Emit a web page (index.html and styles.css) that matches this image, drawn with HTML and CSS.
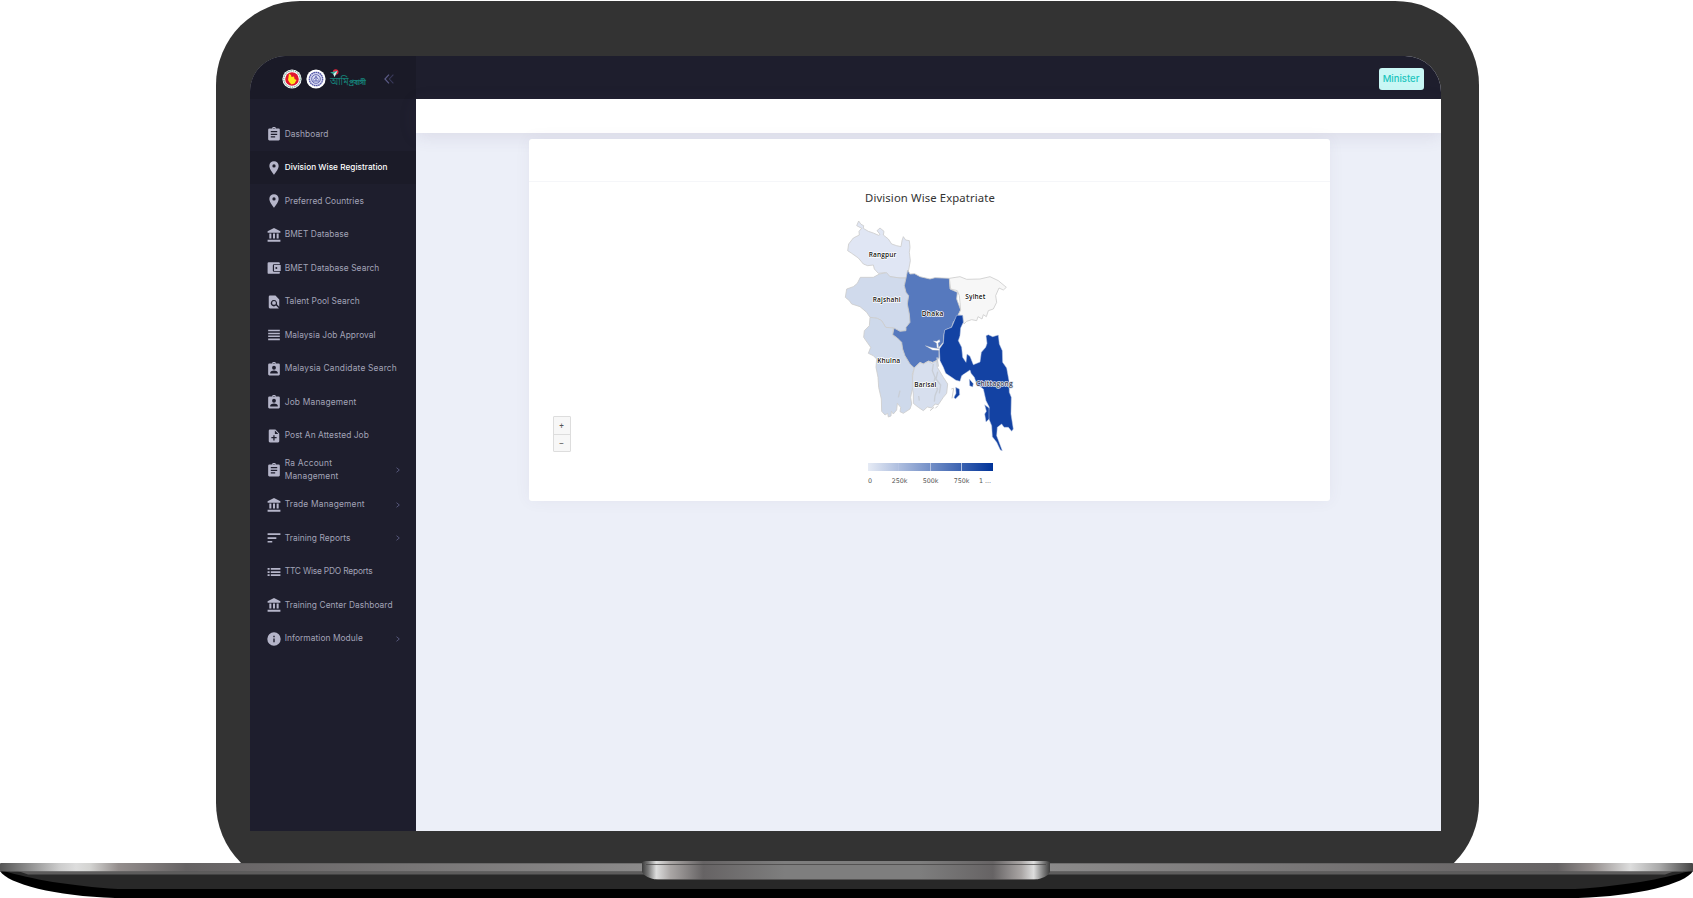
FILE: index.html
```html
<!DOCTYPE html>
<html lang="en">
<head>
<meta charset="utf-8">
<title>Division Wise Registration</title>
<link rel="stylesheet" href="styles.css">
</head>
<body>
<svg class="sprite" width="0" height="0">
  <symbol id="clip" viewBox="0 0 24 24"><path fill-rule="evenodd" d="M20 2.500h-5a3 3 0 0 0-6 0H4a2 2 0 0 0-2 2V21a2 2 0 0 0 2 2h16a2 2 0 0 0 2-2V4.500a2 2 0 0 0-2-2zm-8-1a1 1 0 1 1 0 2 1 1 0 0 1 0-2zm2 16.500H6.500v-2H14zm3.500-4.500h-11v-2h11zm0-4.500h-11V7h11z"/></symbol>
  <symbol id="pin" viewBox="0 0 24 24"><path fill-rule="evenodd" d="M12 .5C7.400.5 4 4 4 8.500 4 14.200 12 23.500 12 23.500s8-9.300 8-15C20 4 16.600.5 12 .5zm0 10.800a2.800 2.800 0 1 1 0-5.600 2.800 2.800 0 0 1 0 5.600z"/></symbol>
  <symbol id="bank" viewBox="0 0 24 24"><path d="M4 9.500V18h3.500V9.500zm6.300 0V18h3.400V9.500zM1 23.500h22V20H1zM16.500 9.500V18H20V9.500zM12 0 1 5.500V8h22V5.500z"/></symbol>
  <symbol id="wallet" viewBox="0 0 24 24"><path fill-rule="evenodd" d="M22 18.500V20a2 2 0 0 1-2 2H3a2 2 0 0 1-2-2V4a2 2 0 0 1 2-2h17a2 2 0 0 1 2 2v1.500H12a2 2 0 0 0-2 2v9a2 2 0 0 0 2 2zM12 17h11.500V7H12zm4-3.300a1.700 1.700 0 1 1 0-3.400 1.700 1.700 0 0 1 0 3.400z"/></symbol>
  <symbol id="find" viewBox="0 0 24 24"><path d="M21 20V7.500L14.500 1H5a2 2 0 0 0-2 2v18a2 2 0 0 0 2 2h14c.5 0 .9-.2 1.200-.4l-4.700-4.400A5.500 5.500 0 1 1 17 16zM8.700 13.500a3.300 3.300 0 1 0 6.600 0 3.300 3.300 0 0 0-6.600 0z"/></symbol>
  <symbol id="lines" viewBox="0 0 24 24"><path d="M2 15.500h20V13H2zm0 5.500h20v-3H2zm0-10.500h20V8H2zM2 3v2.500h20V3z"/></symbol>
  <symbol id="badge" viewBox="0 0 24 24"><path fill-rule="evenodd" d="M20 2.500h-5a3 3 0 0 0-6 0H4a2 2 0 0 0-2 2V21a2 2 0 0 0 2 2h16a2 2 0 0 0 2-2V4.500a2 2 0 0 0-2-2zm-8-1a1 1 0 1 1 0 2 1 1 0 0 1 0-2zm0 5a3.300 3.300 0 1 1 0 6.600 3.300 3.300 0 0 1 0-6.600zm6.500 13h-13V18c0-2.200 4.300-3.400 6.500-3.400s6.500 1.200 6.500 3.400z"/></symbol>
  <symbol id="note" viewBox="0 0 24 24"><path fill-rule="evenodd" d="M14.500 1H5a2 2 0 0 0-2 2v18a2 2 0 0 0 2 2h14a2 2 0 0 0 2-2V7.500zM16.500 16H13v3.500h-2.200V16H7.500v-2.200h3.300v-3.300H13v3.300h3.500zM13.500 8.500v-6l6 6z"/></symbol>
  <symbol id="sort" viewBox="0 0 24 24"><path d="M1 19.500h8V17H1zM1 4v3h22V4zm0 9.500h15v-3H1z"/></symbol>
  <symbol id="list" viewBox="0 0 24 24"><path d="M1 13.500h3.500v-3H1zm0 5.500h3.500v-3H1zM1 8h3.500V5H1zm5.500 5.500H23v-3H6.500zm0 5.500H23v-3H6.500zm0-14v3H23V5z"/></symbol>
  <symbol id="info" viewBox="0 0 24 24"><path fill-rule="evenodd" d="M12 .5a11.500 11.500 0 1 0 0 23 11.500 11.500 0 0 0 0-23zM13.200 17.500h-2.400V11h2.400zm0-8.500h-2.400V6.500h2.400z"/></symbol>
  <symbol id="chev" viewBox="0 0 6 8"><path d="M1.500 1.700 4.300 4 1.500 6.300" fill="none" stroke="#5a5b80" stroke-width=".9"/></symbol>
</svg>

<div class="lid">
  <div class="screen">
    <aside class="sidebar">
      <div class="brand">
        <svg class="seal" viewBox="0 0 20 20"><circle cx="10" cy="10" r="9.600" fill="#fff"/><circle cx="10" cy="10" r="8.200" fill="none" stroke="#4a9277" stroke-width="1" stroke-dasharray="1.500 .8"/><circle cx="10" cy="10" r="6.800" fill="#e0162f"/><path d="M7 4.800 9 6l.5 2 2.500-.5.500 2.500 2 1-2 3.500-3 1-2-2L6 11z" fill="#ffe51c"/></svg>
        <svg class="seal" viewBox="0 0 20 20"><circle cx="10" cy="10" r="9.600" fill="#fff"/><circle cx="10" cy="10" r="6.700" fill="#d2d3ee" stroke="#5458a8" stroke-width="1.300" stroke-dasharray="1.700 .5"/><circle cx="10" cy="10" r="4.300" fill="#dfe1f5" stroke="#4b51a5" stroke-width=".8"/><path d="M6.500 12h7M10 7v5M7.500 10.500l2.500-3 2.500 3" stroke="#6368b3" fill="none"/></svg>
        <svg class="probashi" viewBox="0 0 36 20">
          <circle cx="5.700" cy="3" r="2.800" fill="#e3263c"/><path d="M0 3.500 7.500 1.700 4.500 8 3.300 5z" fill="#2fae9a"/><path d="m3.300 5 4.200-3.300-3 6.300" fill="#d9f1eb"/>
          <text x="0" y="16" textLength="36" lengthAdjust="spacingAndGlyphs"><tspan class="ami">আমি</tspan><tspan class="pro">প্রবাসী</tspan></text>
        </svg>
        <svg class="collapse" viewBox="0 0 10 10"><path d="M5 .6.900 5 5 9.400" fill="none" stroke="#5a5a86" stroke-width="1.200"/><path d="M9.400.6 5.300 5l4.100 4.400" fill="none" stroke="#3a3a5b" stroke-width="1.100"/></svg>
      </div>
      <nav class="menu">
        <a class="item"><svg><use href="#clip"/></svg><span>Dashboard</span></a>
        <a class="item active"><svg><use href="#pin"/></svg><span>Division Wise Registration</span></a>
        <a class="item"><svg><use href="#pin"/></svg><span>Preferred Countries</span></a>
        <a class="item"><svg><use href="#bank"/></svg><span>BMET Database</span></a>
        <a class="item"><svg><use href="#wallet"/></svg><span>BMET Database Search</span></a>
        <a class="item"><svg><use href="#find"/></svg><span>Talent Pool Search</span></a>
        <a class="item"><svg><use href="#lines"/></svg><span>Malaysia Job Approval</span></a>
        <a class="item wide"><svg><use href="#badge"/></svg><span>Malaysia Candidate Search</span></a>
        <a class="item wide"><svg><use href="#badge"/></svg><span>Job Management</span></a>
        <a class="item"><svg><use href="#note"/></svg><span>Post An Attested Job</span></a>
        <a class="item tall"><svg><use href="#clip"/></svg><span>Ra Account<br>Management</span><svg class="arrow"><use href="#chev"/></svg></a>
        <a class="item wide"><svg><use href="#bank"/></svg><span>Trade Management</span><svg class="arrow"><use href="#chev"/></svg></a>
        <a class="item"><svg><use href="#sort"/></svg><span>Training Reports</span><svg class="arrow"><use href="#chev"/></svg></a>
        <a class="item narrow"><svg><use href="#list"/></svg><span>TTC Wise PDO Reports</span></a>
        <a class="item"><svg><use href="#bank"/></svg><span>Training Center Dashboard</span></a>
        <a class="item"><svg><use href="#info"/></svg><span>Information Module</span><svg class="arrow"><use href="#chev"/></svg></a>
      </nav>
    </aside>
    <div class="main">
      <header class="topbar"><span class="role">Minister</span></header>
      <div class="subheader"></div>
      <main class="content">
        <section class="card">
          <div class="card-head"></div>
          <div class="card-body">
            <h1 class="title">Division Wise Expatriate</h1>
            <svg class="map" viewBox="60 100 540 726">
              <g stroke="#cccccc" stroke-width="2.500" stroke-linejoin="round">
                <path fill="#e0e6f4" d="M116 121L123 131 131 135 130 143 145 152 160 157 176 164 180 161 171 150 180 142 192 152 190 163 205 175 215 190 230 195 243 198 246 180 250 168 257 178 268 180 270 200 268 215 271 240 266 268 258 292 240 292 210 288 195 276 175 278 163 265 160 253 143 255 130 250 115 232 95 218 83 210 86 190 100 172 118 163 117 152 125 143 110 135Z"/>
                <path fill="#d0daec" d="M121 290L160 290 178 280 200 276 210 288 240 292 258 292 253 315 258 335 266 345 262 370 268 400 270 425 258 440 258 450 240 452 220 442 197 440 185 420 172 413 150 410 140 395 120 378 95 370 88 360 76 350 80 325 100 318 112 308Z"/>
                <path fill="#ced9eb" d="M150 410L172 413 185 420 197 440 220 442 218 464 232 472 245 485 248 505 255 525 270 550 283 562 277 580 278 620 272 650 275 670 270 685 250 698 240 693 242 680 232 668 230 688 220 700 214 692 213 706 205 709 203 698 195 703 185 692 184 655 176 620 174 590 168 560 170 535 160 525 145 518 152 500 131 470 133 450 148 435Z"/>
                <path fill="#5679be" d="M263 268L270 280 284 279 300 288 330 295 345 291 388 293 390 325 412 335 410 355 422 388 415 402 400 425 395 440 375 448 372 462 370 485 357 500 357 530 353 538 338 545 325 541 310 550 300 545 283 562 270 550 255 525 248 505 245 485 232 472 218 462 222 442 240 452 258 450 258 440 270 425 268 400 262 370 266 345 258 335 253 315 258 292Z"/>
                <path fill="#d7dfee" d="M283 562L300 546 310 550 325 542 335 548 350 540 352 560 370 590 383 610 380 638 370 650 355 672 345 670 335 682 322 679 310 690 295 680 280 668 280 640 277 620 278 585Z"/>
                <path fill="#f7f7f7" d="M388 293L420 288 440 296 480 295 510 288 535 300 559 320 550 328 537 322 527 345 530 365 520 385 505 390 499 408 490 402 486 415 474 408 470 420 455 417 440 422 432 430 428 405 415 402 422 388 420 365 418 345 412 330 392 325 390 310Z"/>
              </g>
              <g fill="#1342a3" stroke="#c3cee6" stroke-width="1.500" stroke-linejoin="round">
                <path d="M410 404L428 404 430 425 422 442 420 465 415 480 425 500 428 530 438 545 441 520 450 527 460 552 480 544 484 515 497 500 501 488 498 465 505 462 518 468 535 463 538 490 547 510 548 545 560 562 567 600 568 635 574 650 573 700 580 745 575 752 565 740 552 740 545 730 532 740 530 765 547 810 541 808 530 785 517 768 515 735 508 718 502 700 508 680 498 660 490 625 470 610 463 590 453 578 450 568 425 585 420 602 408 599 395 590 377 578 370 560 360 540 358 505 370 488 372 462 374 448 395 440Z"/>
                <path d="M448 595L460 609 458 619 449 615ZM407 620L418 625 419 642 406 655 402 650 408 638ZM494 672L507 682 507 715 498 724 494 700 499 692Z"/>
              </g>
              <path d="M340 550l-3 20 8 20-4 20 12 15-8 20-2 18M353 573l-5 22 14 18-4 25M296 646l2 14M240 630l-5 20M351 530l4 28" fill="none" stroke="#c9ced6" stroke-width="4"/>
              <path d="M316 495l20 6 22 3v5l-20-1zM340 481l10 1 8-5 2 6-6 4 2 15-5-1-1-13z" fill="#fff" stroke="#ccc" stroke-width="1"/>
              <path d="M430 585l13-7" stroke="#fff" stroke-width="5" fill="none"/>
              <path d="M394 625l7-2-5 30M330 690l12-10M346 683l8-8" stroke="#ccc" stroke-width="3" fill="none"/>
              <g class="labels">
                <text x="146" y="228" textLength="83">Rangpur</text>
                <text x="158" y="363" textLength="84">Rajshahi</text>
                <text x="305" y="405" textLength="65">Dhaka</text>
                <text x="436" y="355" textLength="60">Sylhet</text>
                <text x="172" y="547" textLength="68">Khulna</text>
                <text x="283" y="620" textLength="66">Barisal</text>
                <text class="pale" x="468" y="617" textLength="110">Chittagong</text>
              </g>
            </svg>
            <div class="legend">
              <div class="scale"><i></i><i></i><i></i><i></i></div>
              <div class="ticks"><span>0</span><span>250k</span><span>500k</span><span>750k</span><span>1 ...</span></div>
            </div>
            <div class="zoom"><span>+</span><span>−</span></div>
          </div>
        </section>
      </main>
    </div>
  </div>
</div>

<svg class="base" viewBox="0 861 1693 37">
  <defs>
    <linearGradient id="edge"><stop offset="0" stop-color="#555"/><stop offset=".02" stop-color="#999"/><stop offset=".035" stop-color="#ccc"/><stop offset=".045" stop-color="#ddd"/><stop offset=".053" stop-color="#d4d4d2"/><stop offset=".07" stop-color="#948e8d"/><stop offset=".11" stop-color="#656263"/><stop offset=".38" stop-color="#8b8a8a"/><stop offset=".62" stop-color="#8b8a8a"/><stop offset=".92" stop-color="#656263"/><stop offset=".94" stop-color="#948e8d"/><stop offset=".963" stop-color="#ddd"/><stop offset=".98" stop-color="#aaa"/><stop offset="1" stop-color="#444"/></linearGradient>
    <linearGradient id="grip"><stop offset="0" stop-color="#3c3c3c"/><stop offset=".015" stop-color="#777"/><stop offset=".035" stop-color="#ddd"/><stop offset=".07" stop-color="#aaa6a5"/><stop offset=".15" stop-color="#666364"/><stop offset=".35" stop-color="#7e7e7e"/><stop offset=".68" stop-color="#7e7e7e"/><stop offset=".86" stop-color="#666364"/><stop offset=".93" stop-color="#aaa6a5"/><stop offset=".96" stop-color="#ddd"/><stop offset=".985" stop-color="#777"/><stop offset="1" stop-color="#3c3c3c"/></linearGradient>
  </defs>
  <path d="M0 871C8 884 55 896 115 898H1578C1638 896 1685 884 1693 871z" fill="#000"/>
  <path d="M4 871C30 879 70 886 118 889H1575C1623 886 1663 879 1689 871z" fill="#282828"/>
  <path d="M18 871L28 874.500H1665L1675 871z" fill="#5d5c5c"/>
  <rect x="0" y="863" width="1693" height="8.500" rx="1" fill="url(#edge)"/>
  <path d="M240 863.500H1453M10 871.500H1683" stroke="#555" stroke-opacity=".5" fill="none"/>
  <path d="M642 862.500Q643 861 646 861H1046Q1049 861 1050 862.500V872Q1047 878 1034 880H658Q645 878 642 872z" fill="url(#grip)"/>
  <path d="M646 864.500H1046M655 879.500H1037" stroke="#474646" stroke-opacity=".75" fill="none"/>
</svg>
</body>
</html>
```
FILE: styles.css
```css
* { box-sizing: border-box; }
body {
  margin: 0;
  width: 1693px;
  height: 898px;
  overflow: hidden;
  background: #fff;
  position: relative;
  display: flow-root;
  font-family: Inter, "Open Sans", sans-serif;
}
.sprite { position: absolute; }
.lid {
  width: 1263px;
  height: 886px;
  margin: 1px 0 0 215.5px;
  padding: 54.5px 38px 0 34px;
  border-radius: 84px;
  background: #333;
}
.screen {
  display: flex;
  height: 775.5px;
  border-radius: 36px 36px 0 0;
  overflow: hidden;
  background: #eceff8;
}
.sidebar { width: 166.5px; background: #1e1e2d; flex: none; }
.brand {
  height: 43.8px;
  background: #1a1a27;
  display: flex;
  align-items: center;
  padding: 3px 0 0 32.7px;
}
.seal { width: 20px; height: 20px; margin-right: 3.8px; flex: none; }
.probashi { width: 36px; height: 20px; flex: none; overflow: visible; fill: #168078; }
.ami { font: 11px "Noto Sans Bengali", "Noto Sans", sans-serif; }
.pro { font: 700 8px "Noto Sans Bengali", "Noto Sans", sans-serif; }
.collapse { width: 10px; height: 10px; margin-left: 18px; }
.menu { padding-top: 18.1px; }
.item {
  display: flex;
  align-items: center;
  height: 33.5px;
  padding: 0 15.5px 0 17.7px;
  color: #a2a3b7;
  font-size: 8.4px;
  line-height: 13.2px;
  letter-spacing: .06px;
  white-space: nowrap;
}
.item.tall { height: 35.5px; letter-spacing: .2px; }
.item.wide { letter-spacing: .19px; }
.item.narrow { letter-spacing: -.2px; }
.item svg { width: 14px; height: 14px; fill: #b5b5c9; margin-right: 3.5px; flex: none; }
.item .arrow { width: 6px; height: 8px; margin: 0 0 0 auto; }
.item.active { background: #1b1b28; color: #fff; font-weight: 500; font-size: 8.2px; letter-spacing: .04px; }
.main { flex: 1; display: flex; flex-direction: column; }
.topbar {
  height: 43.8px;
  background: #1e1e2d;
  display: flex;
  justify-content: flex-end;
  align-items: center;
  padding: 4.2px 17px 0 0;
}
.role {
  width: 45px;
  height: 22px;
  border-radius: 3px;
  background: #c9f7f5;
  color: #1bc5bd;
  font-size: 9.5px;
  font-weight: 500;
  line-height: 22px;
  text-align: center;
}
.subheader { height: 33.6px; background: #fff; box-shadow: 0 3px 18px rgba(82, 63, 105, .12); z-index: 1; }
.content { padding: 6px 110.5px 0 113px; }
.card {
  position: relative;
  z-index: 2;
  height: 362px;
  background: #fff;
  border-radius: 3px;
  box-shadow: 0 0 16px rgba(82, 63, 105, .06);
}
.card-head { height: 43.6px; border-bottom: 1px solid #f5f6f9; }
.card-body { position: relative; }
.title {
  margin: 0;
  padding: 7px 0 0 1px;
  text-align: center;
  color: #333;
  font: 400 11.3px/17px "Noto Sans", sans-serif;
  letter-spacing: .12px;
  height: 31.2px;
}
.map { display: block; width: 180px; height: 242px; margin-left: 311px; }
.labels { font: 600 20px "Open Sans", sans-serif; fill: #111; stroke: #fff; stroke-width: 4px; paint-order: stroke; stroke-linejoin: round; }
.labels .pale { fill: #3b4256; stroke: #e3e7f0; }
.legend { width: 125px; margin: 7.5px 0 0 338.6px; }
.scale { height: 8px; display: flex; background: linear-gradient(90deg, #e6ebf5, #003399); }
.scale i { flex: 1; border-left: 1px solid #b5c3e2; }
.scale i:first-child { border: 0; }
.ticks {
  display: flex;
  padding: 6.2px 0 0 .5px;
  width: 128px;
  color: #555;
  font: 6.4px/9px "DejaVu Sans", sans-serif;
}
.ticks span { width: 31px; text-align: center; flex: none; }
.ticks span:first-child { width: 16px; text-align: left; }
.ticks span:last-child { width: 14px; text-align: right; }
.zoom {
  position: absolute;
  left: 23.5px;
  top: 233.5px;
  width: 18px;
  height: 36px;
  border: 1px solid #ddd;
  border-radius: 1px;
  background: #f7f7f7;
  color: #555;
  font: 600 8px/18px "Open Sans", sans-serif;
  text-align: center;
}
.zoom span { display: block; height: 17px; }
.zoom span + span { border-top: 1px solid #ddd; line-height: 15px; }
.base { position: absolute; left: 0; top: 861px; width: 1693px; height: 37px; }
```
